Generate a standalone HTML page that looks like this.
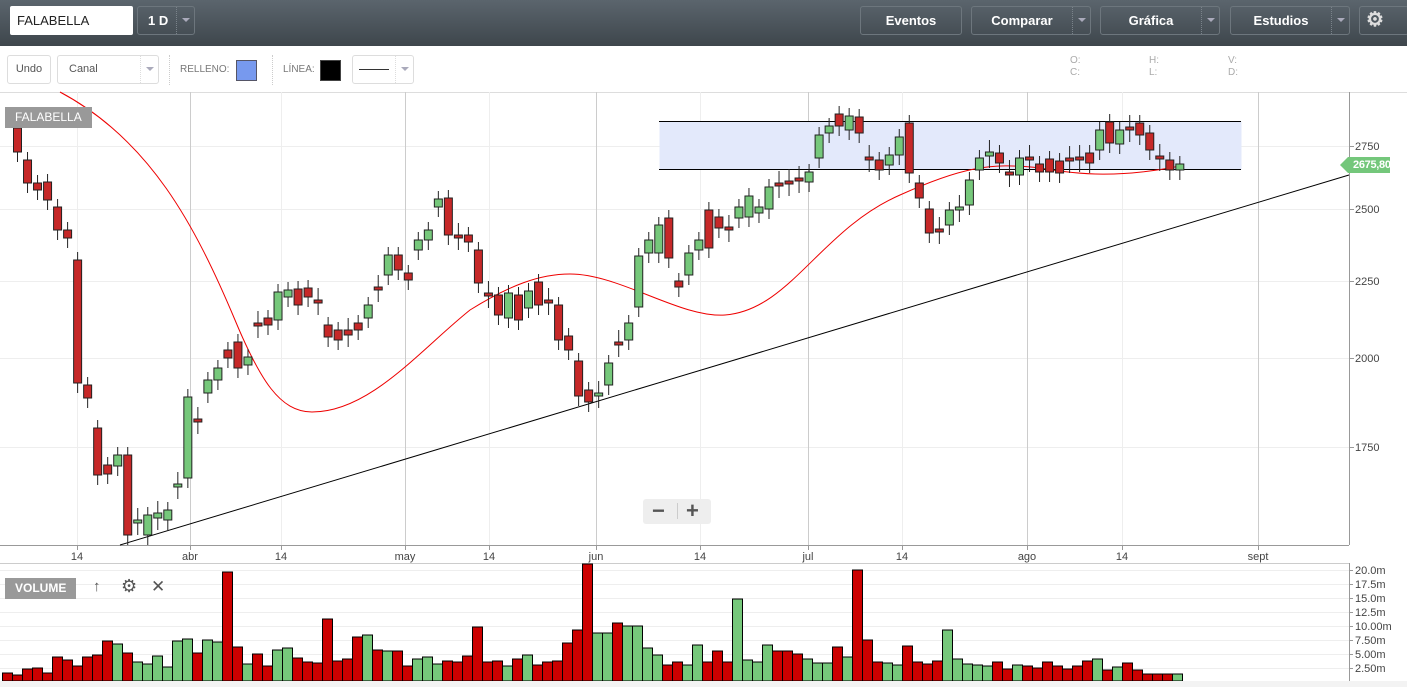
<!DOCTYPE html>
<html><head><meta charset="utf-8">
<style>
*{margin:0;padding:0;box-sizing:border-box}
body{width:1407px;height:687px;overflow:hidden;background:#fff;font-family:"Liberation Sans",Arial,sans-serif;position:relative}
.top{position:absolute;left:0;top:0;width:1407px;height:46px;background:linear-gradient(#5b656d,#3e464c)}
.btn{position:absolute;top:6px;height:29px;border:1px solid #6d767d;border-radius:3px;color:#fff;font-weight:bold;font-size:13px;text-align:center;line-height:27px}
.dd{position:absolute;right:0;top:0;width:18px;height:27px;border-left:1px dotted #7a838a}
.dd:after{content:"";position:absolute;left:5px;top:11px;border:4px solid transparent;border-top:4px solid #aab;}
.sym{position:absolute;left:10px;top:6px;width:123px;height:29px;background:#fff;border-radius:2px;font-size:13px;line-height:29px;padding-left:7px;color:#222}
.tb{position:absolute;top:55px;height:29px;border:1px solid #ddd;border-radius:3px;font-size:11px;color:#555;line-height:27px}
.lbl{position:absolute;font-size:10px;color:#777}
.tag{position:absolute;background:#999;color:#fff;font-size:12px;line-height:21px;padding:0 10px;font-weight:bold}
</style></head><body>
<div class="top">
<div class="sym">FALABELLA</div>
<div class="btn" style="left:137px;width:58px;text-align:left;padding-left:10px">1 D<div class="dd"></div></div>
<div class="btn" style="left:860px;width:102px">Eventos</div>
<div class="btn" style="left:971px;width:120px;padding-right:18px">Comparar<div class="dd"></div></div>
<div class="btn" style="left:1100px;width:120px;padding-right:18px">Gráfica<div class="dd"></div></div>
<div class="btn" style="left:1230px;width:120px;padding-right:18px">Estudios<div class="dd"></div></div>
<div class="btn" style="left:1359px;width:50px;text-align:left;padding-left:6px;font-size:20px;color:#ddd">⚙</div>
</div>
<div class="tb" style="left:7px;width:44px;text-align:center">Undo</div>
<div class="tb" style="left:57px;width:102px;padding-left:11px">Canal<div class="dd" style="border-left-color:#ddd"></div></div>
<div style="position:absolute;left:169px;top:55px;height:30px;border-left:1px dotted #ccc"></div>
<div class="lbl" style="left:180px;top:64px">RELLENO:</div>
<div style="position:absolute;left:236px;top:60px;width:21px;height:21px;background:#7799ee;border:1px solid #556"></div>
<div style="position:absolute;left:272px;top:55px;height:30px;border-left:1px dotted #ccc"></div>
<div class="lbl" style="left:283px;top:64px">LÍNEA:</div>
<div style="position:absolute;left:320px;top:60px;width:21px;height:21px;background:#000;border:1px solid #444"></div>
<div class="tb" style="left:352px;width:62px"><div style="position:absolute;left:6px;top:13px;width:30px;border-top:1px solid #333"></div><div class="dd" style="border-left-color:#ddd"></div></div>
<div class="lbl" style="left:1070px;top:55px;color:#aaa;line-height:12px">O:<br>C:</div>
<div class="lbl" style="left:1149px;top:55px;color:#aaa;line-height:12px">H:<br>L:</div>
<div class="lbl" style="left:1228px;top:55px;color:#aaa;line-height:12px">V:<br>D:</div>
<svg id="s" width="1407" height="687" style="position:absolute;left:0;top:0"></svg>
<div class="tag" style="left:5px;top:107px;font-weight:normal">FALABELLA</div>
<div class="tag" style="left:5px;top:578px">VOLUME</div>
<div style="position:absolute;left:93px;top:578px;font-size:15px;color:#555">↑</div>
<div style="position:absolute;left:121px;top:576px;font-size:18px;color:#555">⚙</div>
<div style="position:absolute;left:151px;top:577px;font-size:17px;color:#555">✕</div>
<div style="position:absolute;left:643px;top:499px;width:68px;height:25px;background:#eee;border-radius:3px;font-size:22px;line-height:24px;color:#555;font-weight:bold"><span style="position:absolute;left:9px">−</span><span style="position:absolute;left:34px;top:4px;height:16px;border-left:1px solid #ccc"></span><span style="position:absolute;left:43px">+</span></div>
<div style="position:absolute;left:1340px;top:157px;width:50px;height:16px;background:#74c77b;color:#fff;font-size:11px;font-weight:bold;line-height:16px;padding-left:13px;white-space:nowrap;letter-spacing:-0.3px;clip-path:polygon(8px 0,100% 0,100% 100%,8px 100%,0 50%)">2675,80</div>
<div style="position:absolute;left:0;top:681px;width:1407px;height:6px;background:#f3f3f3"></div>
<script>
var S='';
function L(x1,y1,x2,y2,c,w){S+='<line x1="'+x1+'" y1="'+y1+'" x2="'+x2+'" y2="'+y2+'" stroke="'+c+'" stroke-width="'+(w||1)+'"/>';}
function T(x,y,t,a){S+='<text x="'+x+'" y="'+y+'" font-size="11" fill="#444" text-anchor="'+(a||'start')+'" font-family="Liberation Sans">'+t+'</text>';}
L(0,92.5,1407,92.5,'#ddd');
[146,209,281,358,447].forEach(function(y){L(0,y+.5,1349,y+.5,'#eee');});
[77,281,489,700,902,1122].forEach(function(x){L(x+.5,92,x+.5,545,'#eee');});
[190,405,596,808,1027,1258].forEach(function(x){L(x+.5,92,x+.5,545,'#ccc');});
L(1349.5,92,1349.5,545,'#999');L(0,545.5,1349,545.5,'#999');
[[146,'2750'],[209,'2500'],[281,'2250'],[358,'2000'],[447,'1750']].forEach(function(a){L(1349,a[0]+.5,1354,a[0]+.5,'#999');T(1355,a[0]+4,a[1]);});
[[77,'14'],[190,'abr'],[281,'14'],[405,'may'],[489,'14'],[596,'jun'],[700,'14'],[808,'jul'],[902,'14'],[1027,'ago'],[1122,'14'],[1258,'sept']].forEach(function(a){L(a[0]+.5,545,a[0]+.5,550,'#999');T(a[0],560,a[1],'middle');});
L(0,563.5,1349,563.5,'#ccc');L(1349.5,563,1349.5,681,'#999');
var vl=['20.0m','17.5m','15.0m','12.5m','10.00m','7.50m','5.00m','2.50m'];
for(var i=0;i<8;i++){var y=570+i*14;L(0,y+.5,1349,y+.5,'#eee');L(1349,y+.5,1353,y+.5,'#999');T(1355,y+4,vl[i]);}
S+='<rect x="659.5" y="121.5" width="582" height="48" fill="#e3e9fb"/>';
L(659,121.5,1241,121.5,'#000');L(659,169.5,1241,169.5,'#000');
L(120,545,1349,175,'#000');
S+='<path d="M60 92 C150 140 195 225 235 320 C260 380 280 412 312 412 C370 412 420 350 470 310 C510 285 540 274 570 274 C620 274 680 318 725 315 C790 310 820 230 900 195 C960 168 990 162 1040 168 C1080 175 1120 178 1180 166" fill="none" stroke="#e00" stroke-width="1"/>';
var C=[[128,152,1],[160,183,1],[183,190,1],[182,200,1],[207,230,1],[230,238,1],[260,383,1],[385,398,1],[428,475,1],[465,474,1],[455,466,0],[455,535,1],[520,522,0],[515,535,0],[513,518,0],[510,520,0],[484,486,0],[397,478,0],[419,421,1],[380,393,0],[368,380,0],[350,358,1],[342,368,1],[357,365,0],[323,325,1],[318,325,1],[292,320,0],[290,297,0],[289,305,1],[288,297,1],[300,302,1],[325,337,1],[330,340,1],[330,335,1],[323,330,1],[305,318,0],[287,289,1],[255,275,0],[255,270,1],[273,280,1],[240,250,0],[230,240,0],[199,207,0],[198,235,1],[235,236,1],[235,242,1],[250,283,1],[293,296,1],[295,315,1],[293,318,0],[295,320,1],[291,308,0],[282,305,1],[300,302,1],[305,340,1],[336,350,1],[361,396,1],[390,402,1],[393,395,0],[363,385,0],[342,343,1],[323,340,0],[256,307,0],[240,253,0],[225,253,0],[218,258,1],[281,287,1],[253,275,0],[240,250,0],[210,248,1],[217,228,1],[227,229,1],[207,218,0],[196,217,0],[207,213,0],[187,209,0],[183,185,1],[181,184,1],[178,181,1],[172,182,0],[135,158,0],[126,133,0],[114,126,1],[116,130,0],[117,133,1],[157,159,1],[160,170,1],[155,165,0],[137,155,0],[123,173,1],[183,198,1],[209,233,1],[229,230,1],[210,225,0],[207,208,0],[180,205,0],[158,170,0],[152,156,0],[153,163,1],[172,174,1],[158,175,0],[157,159,1],[164,172,1],[159,172,1],[161,173,1],[158,160,1],[157,160,1],[153,163,1],[130,150,0],[122,143,1],[130,144,0],[127,128,1],[123,135,1],[133,150,1],[156,158,1],[160,170,1],[164,170,0]];
var V=[673,675,669,668,673,657,660,666,657,655,641,644,653,662,664,656,667,641,639,653,640,642,572,647,664,654,666,650,648,658,662,663,619,661,659,637,635,650,651,651,666,659,657,664,661,662,656,627,662,661,666,659,655,665,662,661,643,630,564,633,633,623,626,626,648,655,665,662,665,645,662,651,662,599,660,662,645,651,651,654,659,663,663,647,657,570,640,662,663,665,646,662,664,661,630,659,664,665,666,662,669,665,666,668,662,666,669,666,661,659,670,667,663,670,674,674,674,674];
for(var i=0;i<V.length;i++){var x=2+i*10;var col=i==0?1:(C[i-1]?C[i-1][2]:1);S+='<rect x="'+(x+.5)+'" y="'+V[i]+'" width="10" height="'+(681-V[i])+'" fill="'+(col?'#cc0000':'#76c87b')+'" stroke="#000" stroke-width="1"/>';}
for(var i=0;i<C.length;i++){var c=C[i],x=17.5+i*10.02,t=c[0],b=c[1];if(b-t<3)b=t+3;var wt=t-(b-t<6?12:8),wb=b+(b-t<6?12:10);
L(x,wt,x,wb,'#222');S+='<rect x="'+(x-4)+'" y="'+t+'" width="8" height="'+(b-t)+'" fill="'+(c[2]?'#c62828':'#76c87b')+'" stroke="#222" stroke-width="1"/>';}
document.getElementById('s').innerHTML=S;
</script>
</body></html>
